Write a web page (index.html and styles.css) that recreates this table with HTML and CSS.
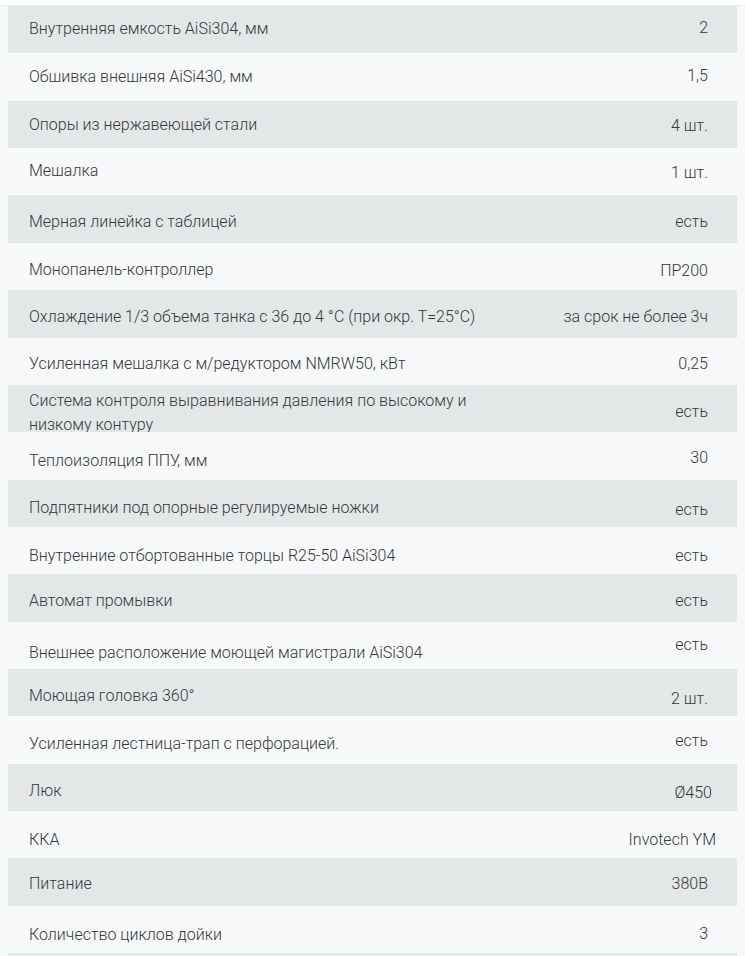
FILE: index.html
```html
<!DOCTYPE html>
<html lang="ru">
<head>
<meta charset="utf-8">
<title>Характеристики</title>
<link rel="stylesheet" href="styles.css">
</head>
<body>
<div class="topbar"></div>
<div class="wrap">
  <div class="specs">
    <div class="row"><div class="label up1">Внутренняя емкость AiSi304, мм</div><div class="value up2">2</div></div>
    <div class="row"><div class="label">Обшивка внешняя AiSi430, мм</div><div class="value up1">1,5</div></div>
    <div class="row"><div class="label dn1">Опоры из нержавеющей стали</div><div class="value dn2">4 шт.</div></div>
    <div class="row"><div class="label up1">Мешалка</div><div class="value dn1">1 шт.</div></div>
    <div class="row"><div class="label dn3">Мерная линейка с таблицей</div><div class="value dn3">есть</div></div>
    <div class="row"><div class="label dn4">Монопанель-контроллер</div><div class="value dn5">ПР200</div></div>
    <div class="row"><div class="label dn3">Охлаждение 1/3 объема танка с 36 до 4 °С (при окр. Т=25°С)</div><div class="value dn3">за срок не более 3ч</div></div>
    <div class="row"><div class="label dn3">Усиленная мешалка с м/редуктором NMRW50, кВт</div><div class="value dn3">0,25</div></div>
    <div class="row"><div class="label label-wrap dn4">Система контроля выравнивания давления по высокому и низкому контуру</div><div class="value dn3">есть</div></div>
    <div class="row"><div class="label dn5">Теплоизоляция ППУ, мм</div><div class="value dn2">30</div></div>
    <div class="row"><div class="label dn5">Подпятники под опорные регулируемые ножки</div><div class="value dn7">есть</div></div>
    <div class="row"><div class="label dn5">Внутренние отбортованные торцы R25-50 AiSi304</div><div class="value dn5">есть</div></div>
    <div class="row"><div class="label dn3">Автомат промывки</div><div class="value dn3">есть</div></div>
    <div class="row"><div class="label dn8">Внешнее расположение моющей магистрали AiSi304</div><div class="value">есть</div></div>
    <div class="row"><div class="label dn3">Моющая головка 360°</div><div class="value dn6">2 шт.</div></div>
    <div class="row"><div class="label dn4">Усиленная лестница-трап с перфорацией.</div><div class="value dn1">есть</div></div>
    <div class="row"><div class="label dn4">Люк</div><div class="value dn6 nudge-r">Ø450</div></div>
    <div class="row"><div class="label dn5">ККА</div><div class="value dn5 nudge-r2">Invotech YM</div></div>
    <div class="row"><div class="label dn2">Питание</div><div class="value dn2">380В</div></div>
    <div class="row"><div class="label dn5">Количество циклов дойки</div><div class="value dn4">3</div></div>
    <div class="row"><div class="label"></div><div class="value"></div></div>
  </div>
</div>
</body>
</html>
```

FILE: styles.css
```css
html, body {
  margin: 0;
  padding: 0;
}
body {
  background: #f7f8fa;
  font-family: Roboto, "Liberation Sans", Arial, sans-serif;
  font-size: 16px;
  font-weight: 300;
  color: #35373a;
  height: 956px;
  overflow: hidden;
}
.topbar {
  height: 5px;
  background: #ffffff;
  border-bottom: 1px solid #e8eaec;
}
.wrap {
  padding: 0 8px;
}
.specs {
  display: flex;
  flex-direction: column;
}
.row {
  height: 47.37px;
  display: flex;
  align-items: center;
  justify-content: space-between;
  padding: 0 29px 0 21px;
  box-sizing: border-box;
  background: #f7f9fa;
}
.row:nth-child(odd) {
  background: #e4e7e8;
}
.label {
  line-height: 24px;
  white-space: nowrap;
}
.label-wrap {
  white-space: normal;
  width: 450px;
}
.value {
  line-height: 24px;
  text-align: right;
  white-space: nowrap;
}
.up1 { padding-bottom: 2px; }
.up2 { padding-bottom: 4px; }
.dn1 { padding-top: 2px; }
.dn2 { padding-top: 4px; }
.dn3 { padding-top: 6px; }
.dn4 { padding-top: 8px; }
.dn5 { padding-top: 10px; }
.dn6 { padding-top: 12px; }
.dn7 { padding-top: 14px; }
.dn8 { padding-top: 16px; }
.nudge-r { margin-right: -4px; }
.nudge-r2 { margin-right: -8px; }
```
